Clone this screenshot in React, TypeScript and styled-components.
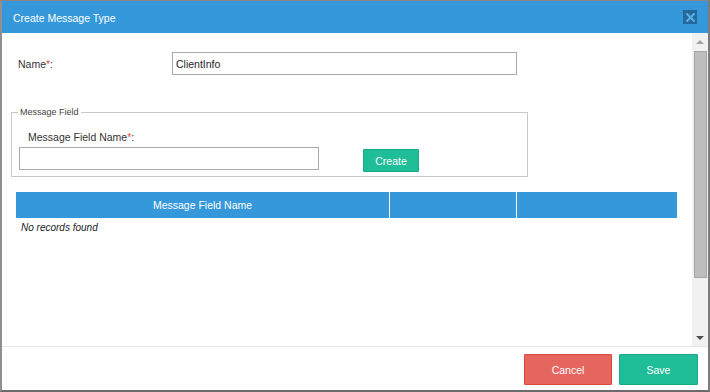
import styled, { createGlobalStyle } from 'styled-components';

const GlobalStyle = createGlobalStyle`
  html, body {
    margin: 0;
    padding: 0;
    background: #8c8c8c;
    overflow: hidden;
  }
  * {
    box-sizing: border-box;
  }
`;

const Dialog = styled.div`
  width: 710px;
  height: 392px;
  display: flex;
  flex-direction: column;
  background: #fff;
  border-top: 1px solid #8e8282;
  border-left: 2px solid #8f8f8f;
  border-right: 2px solid #7c7c7c;
  border-bottom: 2px solid #6a6a6a;
  font-family: 'Liberation Sans', Arial, sans-serif;
  font-size: 10.5px;
  color: #333;
`;

const Header = styled.div`
  height: 32px;
  flex: none;
  background: #3498db;
  display: flex;
  align-items: center;
  justify-content: space-between;
  padding: 0 11px 0 11px;
`;

const Title = styled.div`
  color: #fff;
  font-size: 10.5px;
  padding-top: 2px;
`;

const CloseButton = styled.button`
  width: 14px;
  height: 14px;
  padding: 0;
  border: none;
  background: #24699c;
  display: flex;
  align-items: center;
  justify-content: center;
  cursor: pointer;
`;

const Body = styled.div`
  flex: 1;
  display: flex;
  min-height: 0;
`;

const Content = styled.div`
  flex: 1;
  padding-top: 19px;
`;

const Row = styled.div`
  display: grid;
  grid-template-columns: 154px 345px;
  align-items: center;
  padding-left: 16px;
`;

const Label = styled.label<{ $indent?: number }>`
  display: block;
  color: #333;
  line-height: 12px;
  padding-left: ${(p) => p.$indent || 0}px;
`;

const Req = styled.span`
  color: #e74c3c;
`;

const TextInput = styled.input<{ $width: number }>`
  width: ${(p) => p.$width}px;
  height: 23px;
  border: 1px solid #a9a9a9;
  padding: 0 3px;
  font-family: 'Liberation Sans', Arial, sans-serif;
  font-size: 10.5px;
  color: #222;
  outline: none;
`;

const FieldGroup = styled.div`
  margin: 37px 0 0 9px;
  width: 517px;
  border: 1px solid #c8c8c8;
  padding: 0 0 4px 7px;
`;

const Legend = styled.div`
  margin: -6px 0 0 -1px;
  width: fit-content;
  padding: 0 2px;
  background: #fff;
  font-size: 9px;
  line-height: 10px;
  color: #444;
`;

const FieldRow = styled.div`
  display: flex;
  align-items: flex-start;
  margin-top: 14px;
`;

const FieldColumn = styled.div`
  display: flex;
  flex-direction: column;
  gap: 4px;
`;

const Button = styled.button<{ $variant: 'green' | 'red' }>`
  font-family: 'Liberation Sans', Arial, sans-serif;
  font-size: 10.5px;
  color: #fff;
  border-radius: 1px;
  cursor: pointer;
  padding: 0;
  background: ${(p) => (p.$variant === 'red' ? '#e5665f' : '#1fbd98')};
  border: 1px solid ${(p) => (p.$variant === 'red' ? '#d9463f' : '#18a985')};
`;

const CreateButton = styled(Button)`
  width: 56px;
  height: 23px;
  margin: 18px 0 0 44px;
`;

const Grid = styled.div`
  margin: 15px 0 0 14px;
  width: 661px;
`;

const GridHead = styled.div`
  display: grid;
  grid-template-columns: 373px 126px 160px;
  gap: 1px;
  background: #fff;
  height: 26px;
`;

const HeadCell = styled.div`
  background: #3498db;
  color: #fff;
  display: flex;
  align-items: center;
  justify-content: center;
  font-size: 10.5px;
`;

const Empty = styled.div`
  font-size: 10px;
  font-style: italic;
  color: #222;
  line-height: 12px;
  padding: 4px 0 0 5px;
`;

const Scrollbar = styled.div`
  width: 16px;
  flex: none;
  background: #f1f1f1;
  display: flex;
  flex-direction: column;
  align-items: center;
`;

const ArrowBox = styled.div`
  height: 17px;
  flex: none;
  display: flex;
  align-items: center;
  justify-content: center;
`;

const Arrow = styled.div<{ $dir: 'up' | 'down' }>`
  width: 0;
  height: 0;
  border-left: 4px solid transparent;
  border-right: 4px solid transparent;
  ${(p) =>
    p.$dir === 'up'
      ? 'border-bottom: 4px solid #a3a3a3;'
      : 'border-top: 4px solid #505050;'}
`;

const Track = styled.div`
  flex: 1;
  width: 100%;
  padding: 1px 1px 0 2px;
`;

const Thumb = styled.div`
  height: 227px;
  background: #bdbdbd;
  border: 1px solid #a6a6a6;
`;

const Footer = styled.div`
  height: 44px;
  flex: none;
  border-top: 1px solid #e5e5e5;
  display: flex;
  justify-content: flex-end;
  align-items: flex-start;
  gap: 7px;
  padding: 7px 10px 0 0;
`;

const FooterButton = styled(Button)<{ $w: number }>`
  width: ${(p) => p.$w}px;
  height: 31px;
`;

export default function App() {
  return (
    <>
      <GlobalStyle />
      <Dialog>
        <Header>
          <Title>Create Message Type</Title>
          <CloseButton aria-label="Close">
            <svg width="9" height="9" viewBox="0 0 9 9">
              <path
                d="M1.2 1.2 L7.8 7.8 M7.8 1.2 L1.2 7.8"
                stroke="#5aaee6"
                strokeWidth="2.2"
                strokeLinecap="square"
              />
            </svg>
          </CloseButton>
        </Header>
        <Body>
          <Content>
            <Row>
              <Label>
                Name<Req>*</Req>:
              </Label>
              <TextInput $width={345} defaultValue="ClientInfo" />
            </Row>
            <FieldGroup>
              <Legend>Message Field</Legend>
              <FieldRow>
                <FieldColumn>
                  <Label $indent={9}>
                    Message Field Name<Req>*</Req>:
                  </Label>
                  <TextInput $width={300} />
                </FieldColumn>
                <CreateButton $variant="green">Create</CreateButton>
              </FieldRow>
            </FieldGroup>
            <Grid>
              <GridHead>
                <HeadCell>Message Field Name</HeadCell>
                <HeadCell />
                <HeadCell />
              </GridHead>
              <Empty>No records found</Empty>
            </Grid>
          </Content>
          <Scrollbar>
            <ArrowBox>
              <Arrow $dir="up" />
            </ArrowBox>
            <Track>
              <Thumb />
            </Track>
            <ArrowBox>
              <Arrow $dir="down" />
            </ArrowBox>
          </Scrollbar>
        </Body>
        <Footer>
          <FooterButton $variant="red" $w={88}>
            Cancel
          </FooterButton>
          <FooterButton $variant="green" $w={79}>
            Save
          </FooterButton>
        </Footer>
      </Dialog>
    </>
  );
}
